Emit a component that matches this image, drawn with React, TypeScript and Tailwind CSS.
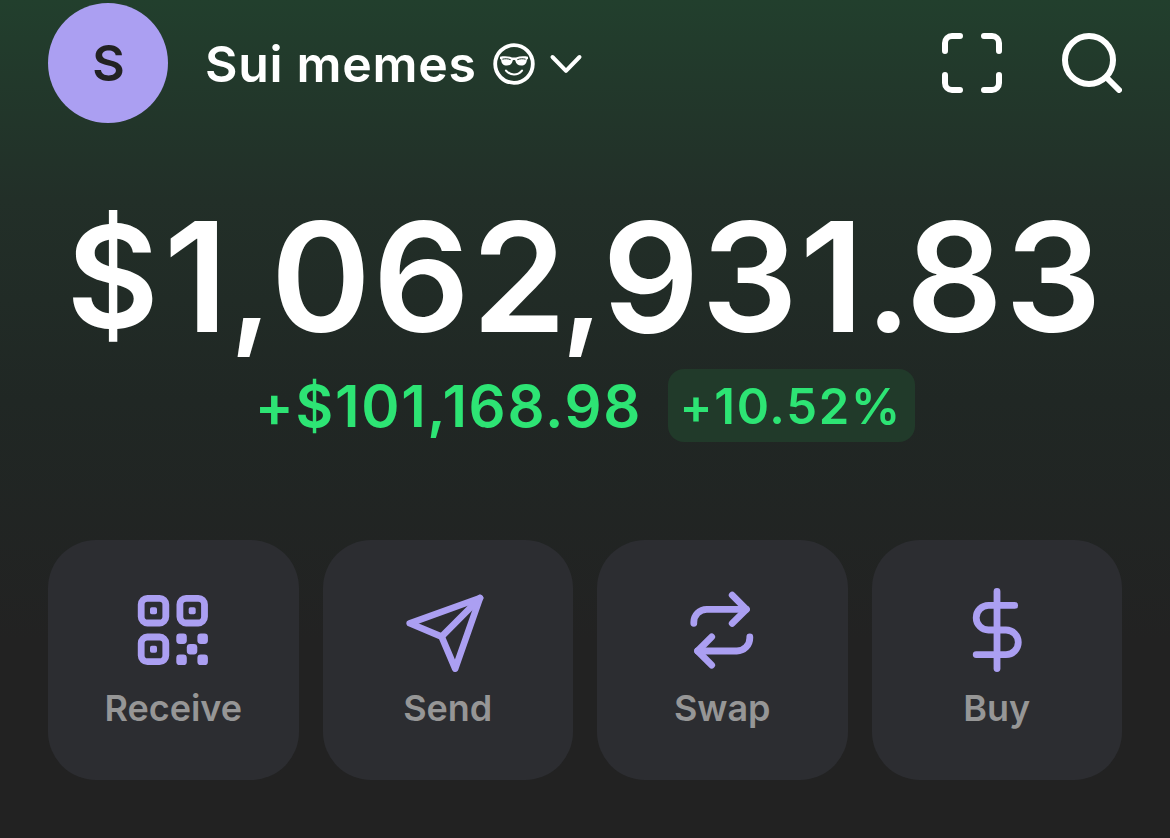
import type { ReactNode } from "react";

const actions: { label: string; icon: ReactNode }[] = [
    { label: "Receive", icon: <ReceiveIcon /> },
    { label: "Send", icon: <SendIcon /> },
    { label: "Swap", icon: <SwapIcon /> },
    { label: "Buy", icon: <BuyIcon /> },
];

function ReceiveIcon() {
    return (
        <svg width="84" height="84" viewBox="0 0 84 84" fill="none">
            <g stroke="currentColor" strokeWidth="6.8">
                <rect x="10.2" y="10.4" width="24.6" height="24.6" rx="6.2" />
                <rect x="48.9" y="10.4" width="24.6" height="24.6" rx="6.2" />
                <rect x="10.2" y="49" width="24.6" height="24.6" rx="6.2" />
            </g>
            <g fill="currentColor">
                <rect x="19" y="19.2" width="7" height="7" rx="1.8" />
                <rect x="57.7" y="19.2" width="7" height="7" rx="1.8" />
                <rect x="19" y="57.8" width="7" height="7" rx="1.8" />
                <rect x="45.3" y="45.4" width="10.5" height="10.5" rx="3.4" />
                <rect x="66.4" y="45.4" width="10.5" height="10.5" rx="3.4" />
                <rect x="55.8" y="56" width="10.5" height="10.5" rx="3.4" />
                <rect x="45.3" y="66.6" width="10.5" height="10.5" rx="3.4" />
                <rect x="66.4" y="66.6" width="10.5" height="10.5" rx="3.4" />
            </g>
        </svg>
    );
}

function SendIcon() {
    return (
        <svg width="84" height="84" viewBox="0 0 84 84" fill="none" stroke="currentColor" strokeWidth="6.6" strokeLinecap="round" strokeLinejoin="round">
            <path d="M74 10 3.7 35.3l31.9 13.3 13.6 32L74 10Z" />
            <path d="M74 10 35.6 48.6" />
        </svg>
    );
}

function SwapIcon() {
    return (
        <svg width="84" height="84" viewBox="0 0 84 84" fill="none" stroke="currentColor" strokeWidth="6.8" strokeLinecap="round" strokeLinejoin="round">
            <path d="M52.2 7.1 66.4 21.3 52.2 35.4" />
            <path d="M66.4 21.3H26.8c-7.4 0-13 5.8-13 13v1" />
            <path d="M31.7 48.8 17.6 63l14.1 14.1" />
            <path d="M17.6 63H56.8c7.4 0 13-5.8 13-13v-1" />
        </svg>
    );
}

function BuyIcon() {
    return (
        <svg width="84" height="84" viewBox="0 0 84 84" fill="none" stroke="currentColor" strokeWidth="6.8" strokeLinecap="round" strokeLinejoin="round">
            <path d="M42 3.4v77.2" />
            <path d="M59.7 17.4H33.5a12.3 12.3 0 0 0 0 24.6H51a12.3 12.3 0 0 1 0 24.6H21.2" />
        </svg>
    );
}

function CoolFace() {
    return (
        <svg width="42" height="42" viewBox="0 0 42 42" fill="none">
            <circle cx="21" cy="21" r="18.8" stroke="currentColor" strokeWidth="3.8" />
            <path fill="currentColor" d="M7 13.8c4.3-.8 8.5-.6 12 .6h4c3.5-1.2 7.7-1.4 12-.6v2.1l-1.1.7c-.3 4-2.1 6-5.700 6-3.3 0-5.2-1.8-5.9-5.2-.7-.5-1.9-.5-2.6 0-.7 3.4-2.6 5.2-5.9 5.2-3.6 0-5.4-2-5.7-6L7 15.9v-2.1Z" />
            <path stroke="#21382b" strokeWidth="1" d="M9.4 16.2c2.7-.7 5.600-.6 8.3.5M32.6 16.2c-2.7-.7-5.6-.6-8.3.5" />
            <path stroke="currentColor" strokeWidth="2.2" strokeLinecap="round" d="M13 27.6c4.4 5.2 11.6 5.2 16 0" />
        </svg>
    );
}

function Header() {
    return (
        <header className="flex h-[120px] items-center text-white">
            <div className="flex size-[120px] items-center justify-center rounded-full bg-[#ab9ff2] pl-px text-[50px] font-semibold text-[#222222]">
                S
            </div>
            <button className="ml-[37px] flex items-center pt-0.5">
                <span className="text-[50px] font-semibold leading-[60px] tracking-[0.7px]">Sui memes</span>
                <span className="ml-4">
                    <CoolFace />
                </span>
                <svg className="ml-[13px]" width="36" height="24" viewBox="0 0 36 24" fill="none" stroke="currentColor" strokeWidth="4" strokeLinecap="round" strokeLinejoin="round">
                    <path d="M4.5 5 18 18.8 31.5 5" />
                </svg>
            </button>
            <div className="ml-auto flex gap-[60px]">
                <svg width="60" height="60" viewBox="0 0 60 60" fill="none" stroke="currentColor" strokeWidth="6" strokeLinecap="round">
                    <path d="M3 18V10a7 7 0 0 1 7-7h8M42 3h8a7 7 0 0 1 7 7v8M57 42v8a7 7 0 0 1-7 7h-8M18 57h-8a7 7 0 0 1-7-7v-8" />
                </svg>
                <svg width="60" height="60" viewBox="0 0 60 60" fill="none" stroke="currentColor" strokeWidth="6" strokeLinecap="round">
                    <circle cx="27" cy="27" r="24" />
                    <path d="M44.5 44.5 57 57" />
                </svg>
            </div>
        </header>
    );
}

function Balance() {
    return (
        <section className="flex flex-col items-center">
            <h1 className="whitespace-nowrap text-[152px] font-semibold leading-[184px] tracking-[1.8px] text-white">
                <span className="mr-[3px] align-[4px] text-[142px] leading-none">$</span>1
                <span className="-mr-[3px] text-[132px] leading-none">,</span>062
                <span className="-ml-[7px] -mr-[3px] text-[132px] leading-none">,</span>931
                <span className="-mr-[7px] text-[142px] leading-none">.</span>83
            </h1>
            <div className="flex h-[73px] items-center gap-[26px] font-semibold text-[#2de474]">
                <span className="text-[58px] leading-[72px] tracking-[1.7px]">+$101,168.98</span>
                <span className="flex h-[73px] w-[247px] items-center justify-center rounded-2xl bg-[#213a2a] pr-0.5 pt-0.5 text-[49px] tracking-[1.7px]">+10.52%</span>
            </div>
        </section>
    );
}

export default function App() {
    return (
        <main className="h-[838px] w-[1170px] overflow-hidden bg-[linear-gradient(180deg,#223f2d_0px,#222f28_200px,#202724_400px,#222222_640px)] px-12 pt-[3px] font-['Inter',sans-serif]">
            <Header />
            <div className="mt-[62px]">
                <Balance />
            </div>
            <nav className="mt-[98px] grid grid-cols-4 gap-6">
                {actions.map((action) => (
                    <button key={action.label} className="flex h-60 flex-col items-center rounded-[48px] bg-[#2c2d31] pt-12 text-[#ab9ff2]">
                        {action.icon}
                        <span className="mt-[14px] text-[36px] font-semibold leading-[44px] text-[#969696]">{action.label}</span>
                    </button>
                ))}
            </nav>
        </main>
    );
}
